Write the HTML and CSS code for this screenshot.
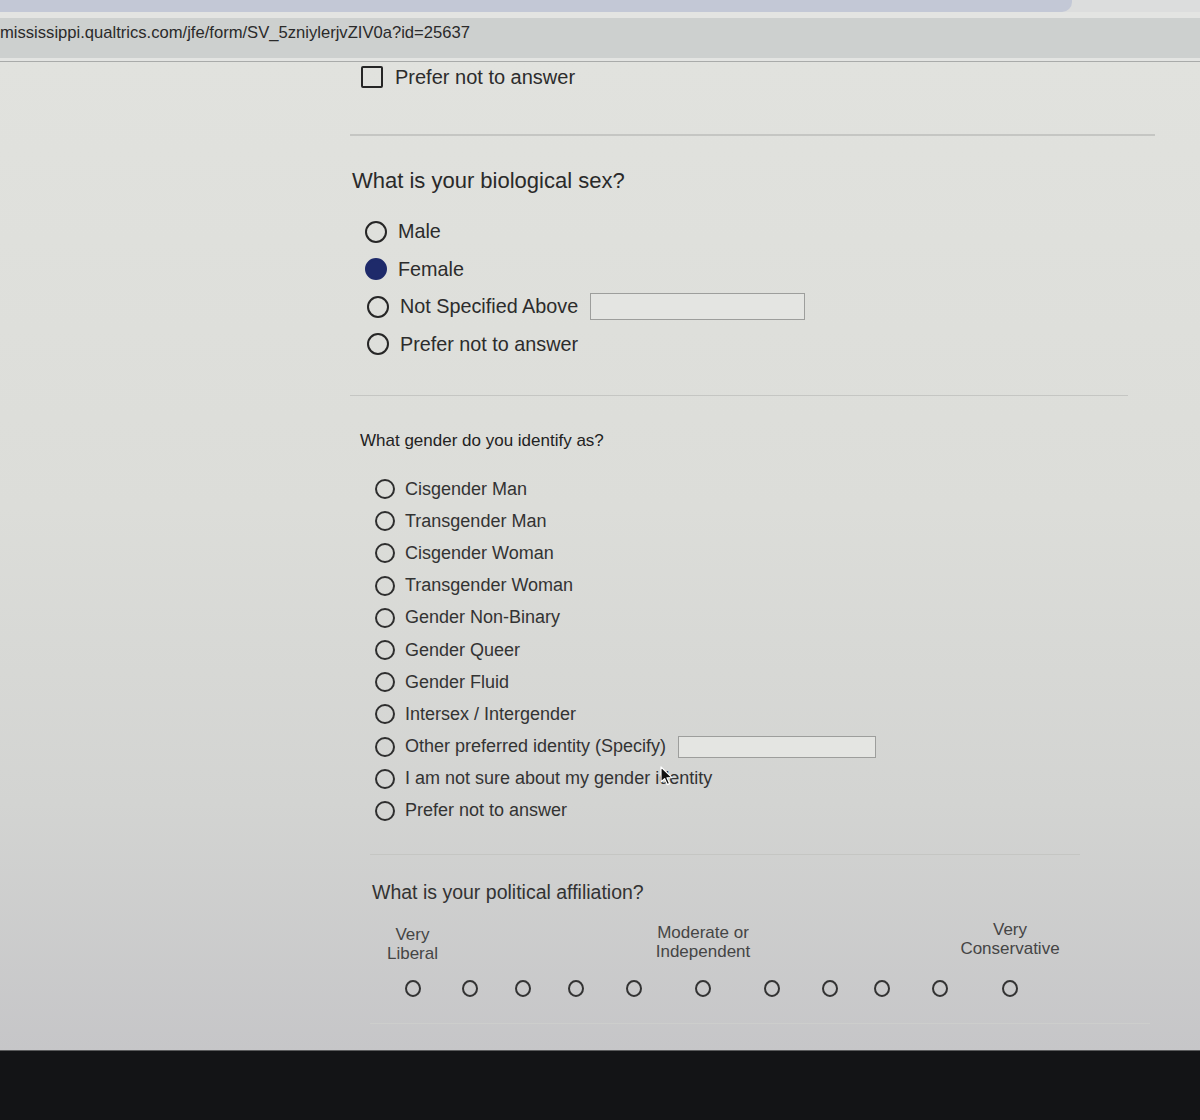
FILE: index.html
```html
<!DOCTYPE html>
<html lang="en">
<head>
<meta charset="utf-8">
<title>Qualtrics Survey</title>
<link rel="stylesheet" href="styles.css">
</head>
<body>
<div class="screen">
  <header class="chrome">
    <div class="tabstrip"><div class="tab"></div></div>
    <div class="addr"><span class="url">mississippi.qualtrics.com/jfe/form/SV_5zniylerjvZIV0a?id=25637</span></div>
    <div class="addr-rule"></div>
  </header>

  <main class="page">
    <div class="check-row">
      <span class="checkbox"></span>
      <span class="check-label">Prefer not to answer</span>
    </div>
    <div class="sep sep1"></div>

    <section class="q q-sex">
      <h2 class="q-title">What is your biological sex?</h2>
      <ul class="choices">
        <li class="choice"><span class="radio"></span><span>Male</span></li>
        <li class="choice"><span class="radio checked"></span><span>Female</span></li>
        <li class="choice shift"><span class="radio"></span><span>Not Specified Above</span><span class="textbox tb1"></span></li>
        <li class="choice shift"><span class="radio"></span><span>Prefer not to answer</span></li>
      </ul>
    </section>
    <div class="sep sep2"></div>

    <section class="q q-gender">
      <h2 class="q-title">What gender do you identify as?</h2>
      <ul class="choices">
        <li class="choice"><span class="radio"></span><span>Cisgender Man</span></li>
        <li class="choice"><span class="radio"></span><span>Transgender Man</span></li>
        <li class="choice"><span class="radio"></span><span>Cisgender Woman</span></li>
        <li class="choice"><span class="radio"></span><span>Transgender Woman</span></li>
        <li class="choice"><span class="radio"></span><span>Gender Non-Binary</span></li>
        <li class="choice"><span class="radio"></span><span>Gender Queer</span></li>
        <li class="choice"><span class="radio"></span><span>Gender Fluid</span></li>
        <li class="choice"><span class="radio"></span><span>Intersex / Intergender</span></li>
        <li class="choice"><span class="radio"></span><span>Other preferred identity (Specify)</span><span class="textbox tb2"></span></li>
        <li class="choice cursor-row"><span class="radio"></span><span>I am not sure about my gender identity</span>
          <svg class="cursor" width="13" height="20" viewBox="0 0 13 20"><path d="M1 1 L1 16 L4.6 12.6 L7.2 18.6 L9.6 17.6 L7 11.8 L12 11.6 Z" fill="#111" stroke="#fff" stroke-width="1.2" stroke-linejoin="round"/></svg>
        </li>
        <li class="choice"><span class="radio"></span><span>Prefer not to answer</span></li>
      </ul>
    </section>
    <div class="sep sep3"></div>

    <section class="q q-pol">
      <h2 class="q-title">What is your political affiliation?</h2>
      <div class="scale">
        <div class="cell c1"><div class="lbl lbl-l">Very<br>Liberal</div><span class="dot"></span></div>
        <div class="cell c2"><div class="lbl"></div><span class="dot"></span></div>
        <div class="cell c3"><div class="lbl"></div><span class="dot"></span></div>
        <div class="cell c4"><div class="lbl"></div><span class="dot"></span></div>
        <div class="cell c5"><div class="lbl"></div><span class="dot"></span></div>
        <div class="cell c6"><div class="lbl lbl-m">Moderate or<br>Independent</div><span class="dot"></span></div>
        <div class="cell c7"><div class="lbl"></div><span class="dot"></span></div>
        <div class="cell c8"><div class="lbl"></div><span class="dot"></span></div>
        <div class="cell c9"><div class="lbl"></div><span class="dot"></span></div>
        <div class="cell c10"><div class="lbl"></div><span class="dot"></span></div>
        <div class="cell c11"><div class="lbl lbl-r">Very<br>Conservative</div><span class="dot"></span></div>
      </div>
    </section>
    <div class="sep sep4"></div>
  </main>

  <div class="bezel"></div>
</div>
</body>
</html>
```

FILE: styles.css
```css
* { box-sizing: border-box; }

html, body {
  margin: 0;
  padding: 0;
}

body {
  font-family: "Liberation Sans", Arial, Helvetica, sans-serif;
  color: #2c2c2c;
  background: #131416;
}

.screen {
  width: 1200px;
  height: 1120px;
  display: flex;
  flex-direction: column;
  overflow: hidden;
}

/* ---------- browser chrome ---------- */
.chrome {
  background: #e3e4e2;
}

.tabstrip {
  height: 12px;
  background: #dcdddd;
}

.tab {
  width: 1072px;
  height: 12px;
  background: #c3c8d6;
  border-bottom-right-radius: 10px;
}

.addr {
  margin-top: 6px;
  height: 40px;
  padding-top: 5px;
  background: #cdd0cf;
  display: flex;
  align-items: flex-start;
  overflow: hidden;
}

.url {
  margin-left: 0;
  font-size: 16.6px;
  line-height: 20px;
  color: #2a2a2a;
  white-space: nowrap;
}

.addr-rule {
  margin-top: 3px;
  height: 1px;
  background: #a9abaa;
}

/* ---------- page ---------- */
.page {
  flex: 1;
  background: linear-gradient(180deg, #e1e2de 0%, #dcddd9 45%, #d3d4d2 75%, #c6c6c8 100%);
}

.check-row {
  margin-top: 3px;
  margin-left: 361px;
  height: 24px;
  display: flex;
  align-items: center;
  gap: 12px;
  font-size: 20px;
}

.checkbox {
  width: 22px;
  height: 22px;
  border: 2px solid #262626;
  border-radius: 2px;
}

.sep {
  height: 1px;
  background: #c5c6c3;
}

.sep1 { margin-top: 45px; margin-left: 350px; width: 805px; height: 2px; }
.sep2 { margin-top: 32px; margin-left: 350px; width: 778px; }
.sep3 { margin-top: 27px; margin-left: 370px; width: 710px; }
.sep4 { margin-top: 26px; margin-left: 370px; width: 780px; background: #cdcecc; }

.q-title {
  margin: 0;
  font-weight: normal;
}

.choices {
  list-style: none;
  margin: 0;
  padding: 0;
}

.choice {
  display: flex;
  align-items: center;
}

.radio {
  flex: none;
  border: 2px solid #262626;
  border-radius: 50%;
}

.radio.checked {
  background: #1e2a6a;
  border-color: #1e2a6a;
}

.textbox {
  border: 1px solid #9d9e9c;
  background: #e4e5e2;
}

/* biological sex */
.q-sex .q-title {
  margin-top: 32px;
  margin-left: 352px;
  font-size: 22px;
  line-height: 26px;
  color: #2a2a2a;
}

.q-sex .choices {
  margin-top: 19px;
}

.q-sex .choice {
  height: 37.5px;
  padding-left: 365px;
  gap: 11px;
  font-size: 19.8px;
}

.q-sex .choice.shift {
  padding-left: 367px;
}

.q-sex .radio {
  width: 22px;
  height: 22px;
}

.tb1 {
  margin-left: 1px;
  width: 215px;
  height: 27px;
}

/* gender */
.q-gender .q-title {
  margin-top: 34px;
  margin-left: 360px;
  font-size: 17px;
  line-height: 22px;
  color: #222;
}

.q-gender .choices {
  margin-top: 21px;
}

.q-gender .choice {
  height: 32.2px;
  padding-left: 375px;
  gap: 10px;
  font-size: 18px;
  color: #333;
}

.q-gender .radio {
  width: 20px;
  height: 20px;
  border-color: #2e2e2e;
}

.tb2 {
  margin-left: 2px;
  width: 198px;
  height: 22px;
}

.cursor-row {
  position: relative;
}

.cursor {
  position: absolute;
  left: 660px;
  top: 3px;
}

/* political */
.q-pol .q-title {
  margin-top: 25px;
  margin-left: 372px;
  font-size: 19.5px;
  line-height: 24px;
  color: #333;
}

.scale {
  margin-top: 19px;
  margin-left: 383px;
  display: grid;
  grid-template-columns: 59px 55px 52.5px 52.5px 63.5px 75px 63.5px 52px 52px 64px 76px;
}

.cell {
  display: flex;
  flex-direction: column;
  align-items: center;
}

.lbl {
  height: 40px;
  font-size: 17px;
  line-height: 19px;
  text-align: center;
  white-space: nowrap;
  color: #454545;
}

.lbl-l { padding-top: 2px; }
.lbl-r { margin-top: -3px; height: 43px; }

.dot {
  margin-top: 17px;
  width: 16px;
  height: 17px;
  border: 2px solid #333;
  border-radius: 50%;
}

/* monitor bezel */
.bezel {
  height: 70px;
  background: #131416;
  border-top: 1px solid #5a5b5c;
}
```
